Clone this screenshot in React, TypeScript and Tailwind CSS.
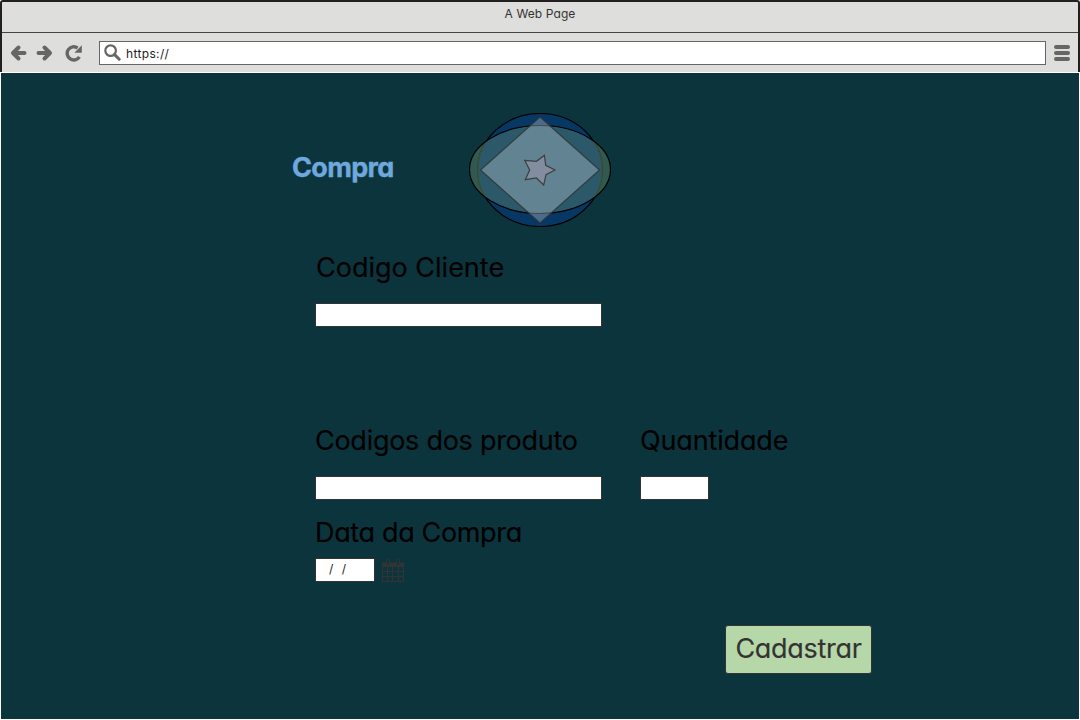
import React from "react";

const Arrow = ({ flip = false }: { flip?: boolean }) => (
  <svg width="17" height="18" viewBox="0 0 17 18" className={flip ? "-scale-x-100" : ""}>
    <path d="M8.500 3.500 3 9l5.500 5.500M3.500 9H14.500" fill="none" stroke="#666" strokeWidth="4" strokeLinecap="round" strokeLinejoin="round" />
  </svg>
);

function BrowserBar() {
  return (
    <header className="h-[72px] shrink-0 rounded-t-[3px] border-x-2 border-t-2 border-[#231f20] bg-[#dededc]">
      <div className="flex h-[31px] justify-center border-b border-[#444] text-[12px] leading-[23px] tracking-[0.1px] text-[#333]">
        <span>A Web Page</span>
      </div>
      <div className="flex h-[39px] items-center pl-2">
        <Arrow />
        <div className="ml-[9px]"><Arrow flip /></div>
        <svg className="ml-[12px]" width="18" height="18" viewBox="0 0 18 18">
          <path d="M14.400 12.800A6.600 6.600 0 1 1 12.600 4" fill="none" stroke="#666" strokeWidth="3.4" />
          <path d="M16.800 1.200V8.700H9.300z" fill="#666" />
        </svg>
        <div className="ml-[16px] mt-px flex h-6 w-[947px] items-center border border-[#666] bg-white pl-[4px] text-[12px] text-[#222]">
          <svg width="17" height="17" viewBox="0 0 17 17" className="-mt-px">
            <circle cx="6.6" cy="6.6" r="5.3" fill="none" stroke="#666" strokeWidth="2.2" />
            <path d="m10.6 10.6 4.6 4.6" stroke="#666" strokeWidth="3" strokeLinecap="round" />
          </svg>
          <span className="ml-[5px] pt-px tracking-[0.35px]">https://</span>
        </div>
        <div className="ml-2 flex flex-col gap-[2px]">
          <i className="h-1 w-4 rounded-full bg-[#666]" />
          <i className="h-1 w-4 rounded-full bg-[#666]" />
          <i className="h-1 w-4 rounded-full bg-[#666]" />
        </div>
      </div>
    </header>
  );
}

const Logo = () => (
  <svg width="142" height="114" viewBox="469 113 142 114" strokeWidth="1.2">
    <clipPath id="lens"><ellipse cx="540" cy="169.5" rx="70.5" ry="44" /></clipPath>
    <ellipse cx="540" cy="170" rx="62.2" ry="56.5" fill="#073763" stroke="#000" />
    <ellipse cx="540" cy="170" rx="62.2" ry="56.5" fill="#033463" clipPath="url(#lens)" />
    <ellipse cx="540" cy="170" rx="62.2" ry="56.5" fill="none" stroke="#1c2416" clipPath="url(#lens)" />
    <ellipse cx="540" cy="169.5" rx="70.5" ry="44" fill="#8fb87d" fillOpacity=".29" stroke="#000" />
    <path d="M540 117l59.5 53-59.5 53-59.5-53z" fill="#c5d2dc" fillOpacity=".35" stroke="#333" strokeOpacity=".85" />
    <path d="M524.8 160.4 536.4 161.3 544.4 155.4 545.7 165.3 555 170 546 174.7 543.7 185 536.4 178 525.3 179.7 529.7 170z" fill="#a99bb0" fillOpacity=".45" stroke="#333" strokeOpacity=".85" />
  </svg>
);

const Calendar = () => (
  <svg width="24" height="26" viewBox="0 0 24 26" fill="none" stroke="#333">
    <path d="M1.5 5.500h21v18h-21z" />
    <path d="M1 4.500h22v4.500H1z" fill="#333" stroke="none" />
    <path d="M1.500 13.500H22.500M1.500 18.500H22.500M6.500 9v14M11.500 9v14M17.500 9v14" />
    <rect x="5.500" y="1.500" width="3" height="5" rx="1" fill="#0c343d" />
    <rect x="15.500" y="1.500" width="3" height="5" rx="1" fill="#0c343d" />
  </svg>
);

const label = "block whitespace-nowrap text-[27px] leading-[34px] text-black [-webkit-text-stroke:0.15px_black]";
const box = "h-6 border border-[#333] bg-white";

export default function App() {
  return (
    <div className="flex h-[720px] w-[1080px] flex-col overflow-hidden bg-white font-['Inter','Liberation_Sans',sans-serif] [font-feature-settings:'cv11']">
      <BrowserBar />
      <main className="mx-px mt-px h-[646px] bg-[#0c343d] pt-10">
        <div className="flex h-[114px] pl-[291px]">
          <h1 className="mt-[38px] w-[177px] text-[27px] leading-[34px] font-bold tracking-[-0.65px] text-[#6fa8dc] [-webkit-text-stroke:0.4px_#6fa8dc]">Compra</h1>
          <Logo />
        </div>
        <form className="ml-[314px] pt-6">
          <label className={label}><span className="ml-px tracking-[0px]">Codigo Cliente</span></label>
          <div className={`${box} mt-[18px] w-[287px]`} />
          <div className="mt-[97px] flex gap-[38px]">
            <div className="w-[287px]">
              <label className={label}><span className="tracking-[-0.27px]">Codigos dos produto</span></label>
              <div className={`${box} mt-[18px]`} />
            </div>
            <div>
              <label className={label}><span className="tracking-[-0.15px]">Quantidade</span></label>
              <div className={`${box} mt-[18px] w-[69px]`} />
            </div>
          </div>
          <div className="mt-4">
            <label className={label}><span className="tracking-[-0.35px]">Data da Compra</span></label>
            <div className="mt-[8px] flex">
              <div className={`${box} w-[60px] pl-[13px] text-[12px] leading-[20px] tracking-[0.6px] whitespace-pre text-[#222]`}>/  /</div>
              <div className="ml-[6px]"><Calendar /></div>
            </div>
          </div>
          <button type="button" className="mt-[41px] ml-[410px] flex h-[49px] w-[147px] items-center justify-center rounded-[3px] border border-[#333] bg-[#b6d7a8] text-[27px] tracking-[-0.3px] text-[#333] [-webkit-text-stroke:0.15px_#333]">
            Cadastrar
          </button>
        </form>
      </main>
    </div>
  );
}
